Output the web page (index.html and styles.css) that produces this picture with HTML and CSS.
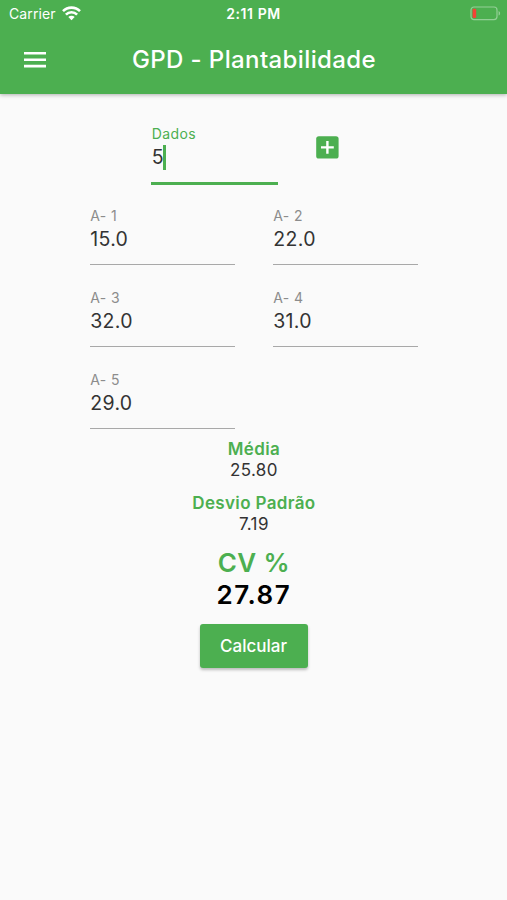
FILE: index.html
```html
<!DOCTYPE html>
<html lang="pt-BR">

<head>
	<meta charset="UTF-8">
	<title>GPD - Plantabilidade</title>
	<link rel="stylesheet" href="styles.css">
</head>

<body>
	<header class="header">
		<div class="status">
			<div class="carrier">
				<span class="carrier-name">Carrier</span>
				<svg class="wifi" width="19" height="15" viewBox="0 0 19 15">
					<path d="M1 5.2a12 12 0 0 1 17 0M3.9 8.6a7.8 7.8 0 0 1 11.2 0" fill="none" stroke="#fff" stroke-width="2.6"/>
					<path d="M9.5 14.3L6.3 11a4.5 4.5 0 0 1 6.4 0z" fill="#fff"/>
				</svg>
			</div>
			<span class="clock">2:11 PM</span>
			<svg class="battery" width="31" height="15" viewBox="0 0 31 15">
				<rect x="1" y="1" width="26" height="12.6" rx="3" fill="none" stroke="#93cf96" stroke-width="1.2"/>
				<rect x="2.6" y="2.7" width="3.6" height="9.2" rx="1.2" fill="#f44336"/>
				<path d="M28.6 5v4.6c2-.8 2-3.8 0-4.6z" fill="#93cf96"/>
			</svg>
		</div>
		<div class="toolbar">
			<svg class="menu" width="24" height="18" viewBox="0 0 24 18">
				<path d="M1 2.2h22M1 8.7h22M1 15.1h22" stroke="#fff" stroke-width="2.6"/>
			</svg>
			<h1 class="title">GPD - Plantabilidade</h1>
		</div>
	</header>

	<main class="content">
		<div class="entry">
			<div class="field active">
				<span class="label">Dados</span>
				<span class="value">5<i class="caret"></i></span>
			</div>
			<svg class="add" width="23" height="23" viewBox="0 0 23 23">
				<rect x=".2" y=".2" width="22.4" height="22.4" rx="2.6" fill="#4caf50"/>
				<path d="M11.4 5v12.8M5 11.4h12.8" stroke="#fff" stroke-width="2.4"/>
			</svg>
		</div>

		<div class="fields">
			<div class="field">
				<span class="label">A- 1</span>
				<span class="value">15.0</span>
			</div>
			<div class="field">
				<span class="label">A- 2</span>
				<span class="value">22.0</span>
			</div>
			<div class="field">
				<span class="label">A- 3</span>
				<span class="value">32.0</span>
			</div>
			<div class="field">
				<span class="label">A- 4</span>
				<span class="value">31.0</span>
			</div>
			<div class="field">
				<span class="label">A- 5</span>
				<span class="value">29.0</span>
			</div>
		</div>

		<div class="result">
			<span class="result-name">Média</span>
			<span class="result-value">25.80</span>
		</div>
		<div class="result">
			<span class="result-name">Desvio Padrão</span>
			<span class="result-value">7.19</span>
		</div>
		<div class="result cv">
			<span class="result-name">CV %</span>
			<span class="result-value">27.87</span>
		</div>

		<button class="calc">Calcular</button>
	</main>
</body>

</html>
```
FILE: styles.css
```css
body {
	margin: 0;
	min-height: 900px;
	background: #fafafa;
	color: #333;
	font-family: Inter, "Liberation Sans", sans-serif;
}

.header {
	height: 94px;
	background: #4caf50;
	color: #fff;
	box-shadow: 0 1px 4px rgba(0, 0, 0, .3);
}

.status {
	display: grid;
	grid-template-columns: 1fr auto 1fr;
	align-items: center;
	height: 27px;
	padding: 0 6px;
	font-size: 14px;
	line-height: 27px;
}

.carrier {
	display: flex;
	align-items: center;
	gap: 6px;
	padding-left: 3px;
}

.carrier-name {
	letter-spacing: .1px;
}

.clock {
	font-weight: 600;
	letter-spacing: .6px;
}

.battery {
	justify-self: end;
}

.toolbar {
	display: grid;
	grid-template-columns: 24px 1fr 23px;
	align-items: center;
	height: 66px;
	padding: 0 23px;
}

.title {
	margin: 0;
	font-size: 24px;
	font-weight: 500;
	letter-spacing: .38px;
	line-height: 66px;
	text-align: center;
	white-space: nowrap;
}

.content {
	display: flex;
	flex-direction: column;
	align-items: center;
	padding-top: 31px;
}

.entry {
	display: flex;
	gap: 38px;
	width: 205px;
	height: 82px;
}

.field {
	display: flex;
	flex-direction: column;
	height: 58px;
	box-sizing: border-box;
	padding-left: .7px;
	border-bottom: 1.5px solid #a8a8a8;
}

.field.active {
	width: 127px;
	height: 59.5px;
	border-bottom: 3px solid #4caf50;
}

.label {
	color: #8c8c8c;
	font-size: 14px;
	letter-spacing: .4px;
	line-height: 18px;
}

.active .label {
	color: #4caf50;
}

.value {
	display: flex;
	align-items: center;
	font-size: 19.5px;
	letter-spacing: .35px;
	line-height: 28px;
}

.caret {
	width: 2.5px;
	height: 25px;
	margin-left: -.9px;
	background: #4caf50;
}

.add {
	margin-top: 11px;
}

.fields {
	display: grid;
	grid-template-columns: 145px 145px;
	grid-auto-rows: 82px;
	column-gap: 38px;
	height: 232px;
}

.result {
	display: flex;
	flex-direction: column;
	align-items: center;
	height: 54px;
	padding-left: .8px;
	font-size: 17px;
	letter-spacing: .35px;
	line-height: 21px;
}

.result-name {
	color: #4caf50;
	font-weight: 600;
}

.cv {
	height: 77px;
	font-size: 26px;
	line-height: 32px;
}

.cv .result-value {
	color: #000;
	font-weight: 600;
	letter-spacing: 1.5px;
}

.calc {
	width: 108px;
	height: 44px;
	padding: 0;
	border: 0;
	border-radius: 3px;
	background: #4caf50;
	box-shadow: 0 2px 3px rgba(0, 0, 0, .25);
	color: #fff;
	font: 500 17px/44px Inter, "Liberation Sans", sans-serif;
}
```
